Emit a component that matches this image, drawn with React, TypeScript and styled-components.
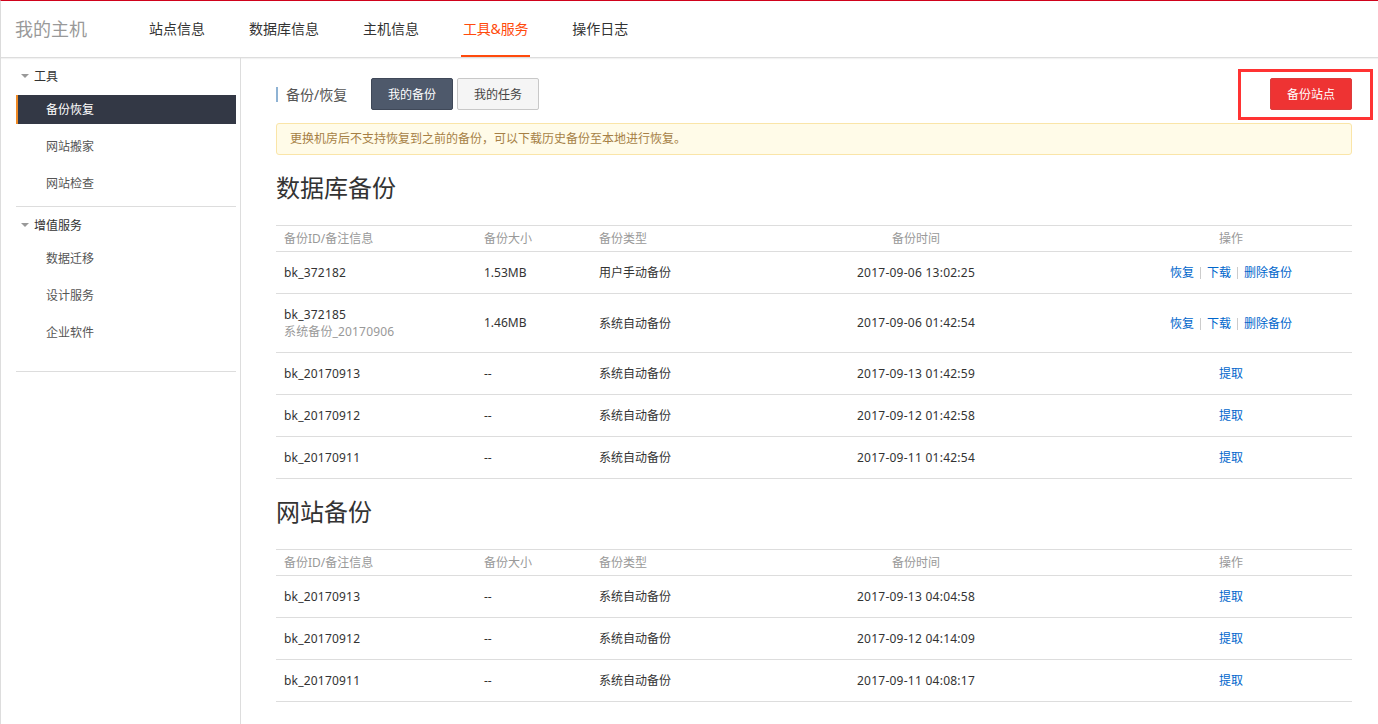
import React from 'react';
import styled, { createGlobalStyle } from 'styled-components';

const GlobalStyle = createGlobalStyle`
  html, body {
    margin: 0;
    padding: 0;
    background: #fff;
    overflow: hidden;
  }
  body {
    font-family: "Noto Sans", "Noto Sans CJK SC", sans-serif;
    font-size: 12px;
    color: #333;
  }
`;

const Page = styled.div`
  height: 724px;
  display: flex;
  flex-direction: column;
  border-top: 1px solid #d0021b;
  border-left: 1px solid #ddd;
  box-sizing: border-box;
  position: relative;
`;

const Header = styled.header`
  height: 56px;
  flex: none;
  display: flex;
  align-items: stretch;
  padding-left: 14px;
  border-bottom: 1px solid #ddd;
  box-shadow: 0 1px 1px rgba(0, 0, 0, 0.05);
`;

const Brand = styled.div`
  width: 132px;
  font-size: 18px;
  line-height: 56px;
  color: #999;
`;

const Nav = styled.nav`
  display: flex;
  gap: 40px;
`;

const NavItem = styled.a<{ $active?: boolean }>`
  padding: 0 2px;
  font-size: 14px;
  line-height: 56px;
  height: 56px;
  box-sizing: border-box;
  letter-spacing: ${({ $active }) => ($active ? '-0.2px' : '0')};
  color: ${({ $active }) => ($active ? '#ff4a0c' : '#333')};
  border-bottom: 2px solid ${({ $active }) => ($active ? '#ff4a0c' : 'transparent')};
`;

const Body = styled.div`
  flex: 1;
  display: flex;
  min-height: 0;
`;

const Sidebar = styled.aside`
  width: 240px;
  flex: none;
  box-sizing: border-box;
  padding: 7px 4px 0 15px;
  border-right: 1px solid #ddd;
`;

const GroupTitle = styled.div<{ $top?: number }>`
  height: 21px;
  margin-top: ${({ $top }) => $top ?? 0}px;
  display: flex;
  align-items: center;
  gap: 5px;
  padding-left: 5px;
  font-size: 12px;
  color: #333;
`;

const Caret = styled.span`
  width: 0;
  height: 0;
  border-style: solid;
  border-width: 4px 4px 0 4px;
  border-color: #999 transparent transparent transparent;
`;

const SideList = styled.div<{ $gapTop: number; $gapBottom: number }>`
  display: flex;
  flex-direction: column;
  gap: 8px;
  padding: ${({ $gapTop }) => $gapTop}px 0 ${({ $gapBottom }) => $gapBottom}px;
  border-bottom: 1px solid #ddd;
`;

const SideItem = styled.a<{ $active?: boolean }>`
  height: 29px;
  line-height: 29px;
  box-sizing: border-box;
  padding-left: ${({ $active }) => ($active ? '28px' : '30px')};
  font-size: 12px;
  color: ${({ $active }) => ($active ? '#fff' : '#555')};
  background: ${({ $active }) => ($active ? '#333845' : 'transparent')};
  border-left: ${({ $active }) => ($active ? '2px solid #f08a24' : 'none')};
`;

const Main = styled.main`
  flex: 1;
  min-width: 0;
  padding: 20px 26px 0 35px;
`;

const Toolbar = styled.div`
  display: flex;
  align-items: center;
  height: 32px;
`;

const ToolbarTitle = styled.div`
  width: 84px;
  margin-right: 11px;
  height: 15px;
  line-height: 15px;
  padding-left: 8px;
  box-sizing: border-box;
  border-left: 2px solid #8fb3d4;
  font-size: 14px;
  white-space: nowrap;
  color: #555;
`;

const Tabs = styled.div`
  display: flex;
  gap: 4px;
  flex: 1;
`;

const Tab = styled.button<{ $active?: boolean }>`
  width: 82px;
  height: 32px;
  border-radius: 2px;
  font: inherit;
  font-size: 12px;
  padding: 0;
  color: ${({ $active }) => ($active ? '#fff' : '#444')};
  background: ${({ $active }) => ($active ? '#4e596b' : '#f5f5f5')};
  border: 1px solid ${({ $active }) => ($active ? '#3f4858' : '#c8c8c8')};
`;

const PrimaryButton = styled.button`
  width: 82px;
  height: 32px;
  padding: 0;
  font: inherit;
  font-size: 12px;
  color: #fff;
  background: #ee3333;
  border: 1px solid #dc3c3c;
  border-radius: 2px;
`;

const Highlight = styled.div`
  position: absolute;
  left: 1237px;
  top: 68px;
  width: 135px;
  height: 51px;
  box-sizing: border-box;
  border: 3px solid #f33;
  pointer-events: none;
`;

const Notice = styled.div`
  margin-top: 13px;
  height: 32px;
  box-sizing: border-box;
  line-height: 30px;
  padding-left: 13px;
  font-size: 12px;
  color: #a67f45;
  background: #fffbe8;
  border: 1px solid #fae5a8;
  border-radius: 3px;
`;

const SectionTitle = styled.h2<{ $top: number; $bottom: number }>`
  margin: ${({ $top }) => $top}px 0 ${({ $bottom }) => $bottom}px;
  height: 36px;
  line-height: 36px;
  font-size: 24px;
  font-weight: 400;
  color: #333;
`;

const Table = styled.table`
  width: 100%;
  table-layout: fixed;
  border-collapse: collapse;
  border-top: 1px solid #ddd;
`;

const Th = styled.th<{ $center?: boolean; $width: number }>`
  width: ${({ $width }) => $width}px;
  height: 26px;
  padding: 0 8px 2px;
  box-sizing: border-box;
  font-size: 12px;
  font-weight: 400;
  color: #999;
  text-align: ${({ $center }) => ($center ? 'center' : 'left')};
  border-bottom: 1px solid #ddd;
`;

const Tr = styled.tr<{ $tall?: boolean }>`
  height: ${({ $tall }) => ($tall ? 59 : 42)}px;
`;

const Td = styled.td<{ $center?: boolean; $spacing?: number }>`
  padding: 0 8px 1px;
  font-size: 12px;
  color: #333;
  letter-spacing: ${({ $spacing }) => $spacing ?? 0}px;
  text-align: ${({ $center }) => ($center ? 'center' : 'left')};
  border-bottom: 1px solid #ddd;
`;

const Remark = styled.div`
  color: #999;
  line-height: 17px;
  letter-spacing: 0.15px;
`;

const BackupId = styled.div`
  line-height: 17px;
  letter-spacing: 0.2px;
`;

const Link = styled.a`
  color: #0066cc;
`;

const Sep = styled.span`
  display: inline-block;
  width: 1px;
  height: 12px;
  margin: 0 6px;
  vertical-align: -2px;
  background: #ccc;
`;

type Row = {
  id: string;
  remark?: string;
  size: string;
  type: string;
  time: string;
  restorable?: boolean;
};

const databaseRows: Row[] = [
  { id: 'bk_372182', size: '1.53MB', type: '用户手动备份', time: '2017-09-06 13:02:25', restorable: true },
  { id: 'bk_372185', remark: '系统备份_20170906', size: '1.46MB', type: '系统自动备份', time: '2017-09-06 01:42:54', restorable: true },
  { id: 'bk_20170913', size: '--', type: '系统自动备份', time: '2017-09-13 01:42:59' },
  { id: 'bk_20170912', size: '--', type: '系统自动备份', time: '2017-09-12 01:42:58' },
  { id: 'bk_20170911', size: '--', type: '系统自动备份', time: '2017-09-11 01:42:54' },
];

const siteRows: Row[] = [
  { id: 'bk_20170913', size: '--', type: '系统自动备份', time: '2017-09-13 04:04:58' },
  { id: 'bk_20170912', size: '--', type: '系统自动备份', time: '2017-09-12 04:14:09' },
  { id: 'bk_20170911', size: '--', type: '系统自动备份', time: '2017-09-11 04:08:17' },
];

const BackupTable: React.FC<{ rows: Row[] }> = ({ rows }) => (
  <Table>
    <thead>
      <tr>
        <Th $width={200}>备份ID/备注信息</Th>
        <Th $width={115}>备份大小</Th>
        <Th $width={131}>备份类型</Th>
        <Th $width={388} $center>备份时间</Th>
        <Th $width={242} $center>操作</Th>
      </tr>
    </thead>
    <tbody>
      {rows.map((row) => (
        <Tr key={row.id} $tall={!!row.remark}>
          <Td>
            <BackupId>{row.id}</BackupId>
            {row.remark && <Remark>{row.remark}</Remark>}
          </Td>
          <Td>{row.size}</Td>
          <Td>{row.type}</Td>
          <Td $center $spacing={0.25}>{row.time}</Td>
          <Td $center>
            {row.restorable ? (
              <>
                <Link>恢复</Link>
                <Sep />
                <Link>下载</Link>
                <Sep />
                <Link>删除备份</Link>
              </>
            ) : (
              <Link>提取</Link>
            )}
          </Td>
        </Tr>
      ))}
    </tbody>
  </Table>
);

export default function App() {
  return (
    <>
      <GlobalStyle />
      <Page>
        <Header>
          <Brand>我的主机</Brand>
          <Nav>
            <NavItem>站点信息</NavItem>
            <NavItem>数据库信息</NavItem>
            <NavItem>主机信息</NavItem>
            <NavItem $active>工具&amp;服务</NavItem>
            <NavItem>操作日志</NavItem>
          </Nav>
        </Header>
        <Body>
          <Sidebar>
            <GroupTitle>
              <Caret />
              工具
            </GroupTitle>
            <SideList $gapTop={9} $gapBottom={8}>
              <SideItem $active>备份恢复</SideItem>
              <SideItem>网站搬家</SideItem>
              <SideItem>网站检查</SideItem>
            </SideList>
            <GroupTitle $top={7}>
              <Caret />
              增值服务
            </GroupTitle>
            <SideList $gapTop={9} $gapBottom={24}>
              <SideItem>数据迁移</SideItem>
              <SideItem>设计服务</SideItem>
              <SideItem>企业软件</SideItem>
            </SideList>
          </Sidebar>
          <Main>
            <Toolbar>
              <ToolbarTitle>备份/恢复</ToolbarTitle>
              <Tabs>
                <Tab $active>我的备份</Tab>
                <Tab>我的任务</Tab>
              </Tabs>
              <PrimaryButton>备份站点</PrimaryButton>
            </Toolbar>
            <Notice>更换机房后不支持恢复到之前的备份，可以下载历史备份至本地进行恢复。</Notice>
            <SectionTitle $top={15} $bottom={19}>数据库备份</SectionTitle>
            <BackupTable rows={databaseRows} />
            <SectionTitle $top={15} $bottom={19}>网站备份</SectionTitle>
            <BackupTable rows={siteRows} />
          </Main>
        </Body>
        <Highlight />
      </Page>
    </>
  );
}
